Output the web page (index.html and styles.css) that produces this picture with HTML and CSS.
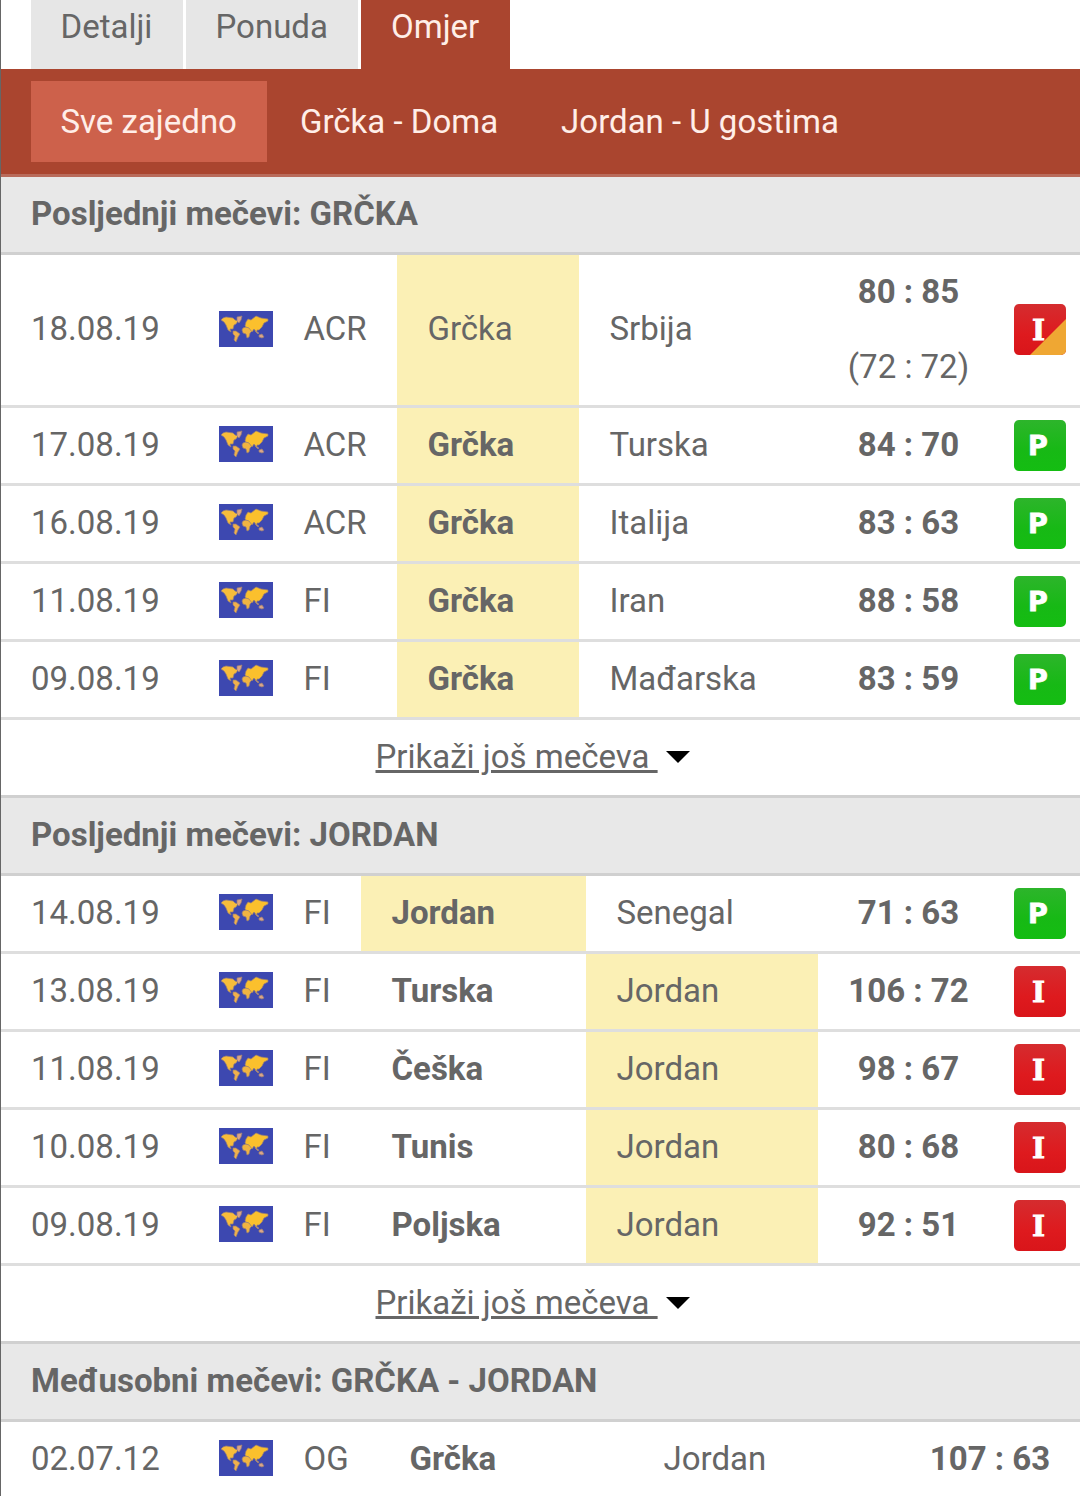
FILE: index.html
```html
<!DOCTYPE html>
<html lang="hr">

<head>
    <meta charset="UTF-8">
    <meta name="viewport" content="width=device-width, initial-scale=1.0">
    <title>Omjer - Grčka - Jordan</title>
    <link rel="stylesheet" href="styles.css">
</head>

<body>
    <!-- Shared icons -->
    <svg class="sprite" width="0" height="0">
        <defs>
            <linearGradient id="green" x1="0" y1="0" x2="0" y2="1">
                <stop offset="0" stop-color="#2db52b" />
                <stop offset="0.6" stop-color="#17b915" />
                <stop offset="1" stop-color="#14bd12" />
            </linearGradient>
            <linearGradient id="red" x1="0" y1="0" x2="0" y2="1">
                <stop offset="0" stop-color="#d52c2f" />
                <stop offset="0.6" stop-color="#de1a1e" />
                <stop offset="1" stop-color="#d9151a" />
            </linearGradient>
            <clipPath id="round">
                <rect width="52" height="51" rx="5" />
            </clipPath>
        </defs>
        <symbol id="world" viewBox="0 0 54 36">
            <rect width="54" height="36" fill="#3d48b0" />
            <g stroke="#9a7f76" stroke-width="0.7" stroke-linejoin="round">
                <path fill="#f8bd3a" d="M4 7l3-1 7 1 2 2 3 1-2 3-2 1-1 4-3 0 1 3-3-2-2-5-2-3-3-2z" />
                <path fill="#dba588" d="M18 6l5-1-1 4-2 3-2-2z" />
                <path fill="#f0b04c" d="M14 20l3 0 4 3-2 3-2 5-2-2 1-4-2-2z" />
                <path fill="#f0b442" d="M24 17l3-1 5 1 1 3-2 2-1 4-2 1-1-4-3-1-1-3z" />
                <path fill="#fbc02d" d="M26 15l1-4 2-3 3 1 5-4 5 2 7 1 0 2-4 2-2 4-3 3-2 0 0 3-3-4-2 3-3-4-3-1z" />
                <path fill="#dba588" d="M36 20l4 2-1 1z" />
                <path fill="#dba588" d="M40 24l3-1 2 3-2 1-3-1z" />
            </g>
        </symbol>
    </svg>

    <div class="page">
        <ul class="tabs">
            <li class="tab">Detalji</li>
            <li class="tab tab-ponuda">Ponuda</li>
            <li class="tab active">Omjer</li>
        </ul>
        <ul class="subtabs">
            <li class="subtab active">Sve zajedno</li>
            <li class="subtab">Grčka - Doma</li>
            <li class="subtab">Jordan - U gostima</li>
        </ul>

        <div class="matches greece">
            <h2>Posljednji mečevi: GRČKA</h2>
            <div class="row overtime">
                <span class="date">18.08.19</span>
                <svg class="flag"><use href="#world" /></svg>
                <span class="league">ACR</span>
                <span class="team highlight">Grčka</span>
                <span class="team">Srbija</span>
                <span class="score"><b>80 : 85</b><br>(72 : 72)</span>
                <svg class="badge lost" viewBox="0 0 52 52">
                    <g clip-path="url(#round)">
                        <rect width="52" height="51" fill="url(#red)" />
                        <path d="M15 52L52 15v37z" fill="#efa733" />
                    </g>
                    <text x="24.5" y="36">I</text>
                </svg>
            </div>
            <div class="row">
                <span class="date">17.08.19</span>
                <svg class="flag"><use href="#world" /></svg>
                <span class="league">ACR</span>
                <span class="team highlight winner">Grčka</span>
                <span class="team">Turska</span>
                <span class="score"><b>84 : 70</b></span>
                <svg class="badge" viewBox="0 0 52 52"><rect width="52" height="51" rx="5" fill="url(#green)" /><text x="24" y="35">P</text></svg>
            </div>
            <div class="row">
                <span class="date">16.08.19</span>
                <svg class="flag"><use href="#world" /></svg>
                <span class="league">ACR</span>
                <span class="team highlight winner">Grčka</span>
                <span class="team">Italija</span>
                <span class="score"><b>83 : 63</b></span>
                <svg class="badge" viewBox="0 0 52 52"><rect width="52" height="51" rx="5" fill="url(#green)" /><text x="24" y="35">P</text></svg>
            </div>
            <div class="row">
                <span class="date">11.08.19</span>
                <svg class="flag"><use href="#world" /></svg>
                <span class="league">FI</span>
                <span class="team highlight winner">Grčka</span>
                <span class="team">Iran</span>
                <span class="score"><b>88 : 58</b></span>
                <svg class="badge" viewBox="0 0 52 52"><rect width="52" height="51" rx="5" fill="url(#green)" /><text x="24" y="35">P</text></svg>
            </div>
            <div class="row">
                <span class="date">09.08.19</span>
                <svg class="flag"><use href="#world" /></svg>
                <span class="league">FI</span>
                <span class="team highlight winner">Grčka</span>
                <span class="team">Mađarska</span>
                <span class="score"><b>83 : 59</b></span>
                <svg class="badge" viewBox="0 0 52 52"><rect width="52" height="51" rx="5" fill="url(#green)" /><text x="24" y="35">P</text></svg>
            </div>
            <div class="more">
                <a>Prikaži još mečeva </a>
                <svg class="caret" viewBox="0 0 24 12"><path d="M0 0h24L12 12z" /></svg>
            </div>
        </div>

        <div class="matches jordan">
            <h2>Posljednji mečevi: JORDAN</h2>
            <div class="row">
                <span class="date">14.08.19</span>
                <svg class="flag"><use href="#world" /></svg>
                <span class="league">FI</span>
                <span class="team highlight winner">Jordan</span>
                <span class="team">Senegal</span>
                <span class="score"><b>71 : 63</b></span>
                <svg class="badge" viewBox="0 0 52 52"><rect width="52" height="51" rx="5" fill="url(#green)" /><text x="24" y="35">P</text></svg>
            </div>
            <div class="row">
                <span class="date">13.08.19</span>
                <svg class="flag"><use href="#world" /></svg>
                <span class="league">FI</span>
                <span class="team winner">Turska</span>
                <span class="team highlight">Jordan</span>
                <span class="score"><b>106 : 72</b></span>
                <svg class="badge lost" viewBox="0 0 52 52"><rect width="52" height="51" rx="5" fill="url(#red)" /><text x="24.5" y="36">I</text></svg>
            </div>
            <div class="row">
                <span class="date">11.08.19</span>
                <svg class="flag"><use href="#world" /></svg>
                <span class="league">FI</span>
                <span class="team winner">Češka</span>
                <span class="team highlight">Jordan</span>
                <span class="score"><b>98 : 67</b></span>
                <svg class="badge lost" viewBox="0 0 52 52"><rect width="52" height="51" rx="5" fill="url(#red)" /><text x="24.5" y="36">I</text></svg>
            </div>
            <div class="row">
                <span class="date">10.08.19</span>
                <svg class="flag"><use href="#world" /></svg>
                <span class="league">FI</span>
                <span class="team winner">Tunis</span>
                <span class="team highlight">Jordan</span>
                <span class="score"><b>80 : 68</b></span>
                <svg class="badge lost" viewBox="0 0 52 52"><rect width="52" height="51" rx="5" fill="url(#red)" /><text x="24.5" y="36">I</text></svg>
            </div>
            <div class="row">
                <span class="date">09.08.19</span>
                <svg class="flag"><use href="#world" /></svg>
                <span class="league">FI</span>
                <span class="team winner">Poljska</span>
                <span class="team highlight">Jordan</span>
                <span class="score"><b>92 : 51</b></span>
                <svg class="badge lost" viewBox="0 0 52 52"><rect width="52" height="51" rx="5" fill="url(#red)" /><text x="24.5" y="36">I</text></svg>
            </div>
            <div class="more">
                <a>Prikaži još mečeva </a>
                <svg class="caret" viewBox="0 0 24 12"><path d="M0 0h24L12 12z" /></svg>
            </div>
        </div>

        <div class="matches mutual">
            <h2>Međusobni mečevi: GRČKA - JORDAN</h2>
            <div class="row">
                <span class="date">02.07.12</span>
                <svg class="flag"><use href="#world" /></svg>
                <span class="league">OG</span>
                <span class="team winner">Grčka</span>
                <span class="team">Jordan</span>
                <span class="score"><b>107 : 63</b></span>
            </div>
        </div>
    </div>
</body>

</html>
```

FILE: styles.css
```css
* {
    box-sizing: border-box;
}

body {
    margin: 0;
    font-family: Roboto, "Liberation Sans", sans-serif;
    font-size: 33px;
    line-height: 73px;
    color: #666;
    background-color: #fff;
}

.sprite {
    display: block;
}

.page {
    height: 1496px;
    overflow: hidden;
    border-left: 1px solid #666;
}

.tabs,
.subtabs {
    display: flex;
    margin: 0;
    padding: 0 0 0 29.5px;
    list-style: none;
    white-space: nowrap;
}

.tabs {
    height: 69px;
    gap: 3px;
}

.tab {
    width: 152px;
    padding-left: 30px;
    line-height: 54px;
    background-color: #e6e6e6;
}

.tab-ponuda {
    width: 172.5px;
}

.tab.active {
    width: 149px;
    color: #ffeee8;
    background-color: #aa452f;
}

.subtabs {
    height: 108px;
    padding-top: 12px;
    gap: 3px;
    background-color: #aa452f;
    border-bottom: 3px solid #b96b5b;
}

.subtab {
    height: 81px;
    padding: 0 30px;
    line-height: 81px;
    color: #ffeee8;
}

.subtab.active {
    background-color: #cd614b;
}

h2 {
    height: 78px;
    margin: 0;
    padding-left: 30px;
    font-size: 33px;
    line-height: 73px;
    font-weight: bold;
    background-color: #e8e8e8;
    border-bottom: 3px solid #d0d0d0;
}

.row {
    display: grid;
    grid-template-rows: 75px;
    align-items: center;
    border-bottom: 3px solid #dedede;
    white-space: nowrap;
}

.row.overtime {
    grid-template-rows: 150px;
}

.greece .row {
    grid-template-columns: 218.4px 83.6px 94px 182px 239.5px 180px 1fr;
}

.jordan .row {
    grid-template-columns: 218.4px 83.6px 58px 225px 232.5px 180px 1fr;
}

.mutual .row {
    grid-template-columns: 218.4px 83.6px 76px 254px 267px 180px;
}

.date {
    padding: 0 0 2px 30px;
}

.flag {
    width: 54px;
    height: 36px;
    margin-bottom: 3px;
}

.league {
    padding: 0 0 2px 0.5px;
}

.team {
    display: flex;
    align-items: center;
    align-self: stretch;
    padding: 0 0 2px 30.5px;
}

.overtime .date,
.overtime .league,
.overtime .team {
    padding-bottom: 4px;
}

.highlight {
    background-color: #fbf0b5;
}

.winner {
    font-weight: bold;
}

.score {
    padding-bottom: 2px;
    text-align: center;
}

.overtime .score {
    line-height: 75px;
}

.badge {
    width: 52px;
    height: 52px;
    margin-left: 15.5px;
}

.badge text {
    font-family: "DejaVu Sans", sans-serif;
    font-size: 27px;
    font-weight: bold;
    text-anchor: middle;
    fill: #fff;
    stroke: #fff;
    stroke-width: 0.8px;
}

.badge.lost text {
    font-family: "DejaVu Serif", serif;
    font-size: 28px;
}

.more {
    display: flex;
    align-items: center;
    height: 78px;
    padding: 0 0 2px 374.5px;
    border-bottom: 3px solid #d0d0d0;
}

.more a {
    white-space: pre;
    text-decoration: underline;
    text-decoration-thickness: 3px;
}

.caret {
    width: 24px;
    height: 12px;
    margin-left: 8px;
    fill: #000;
}
```
